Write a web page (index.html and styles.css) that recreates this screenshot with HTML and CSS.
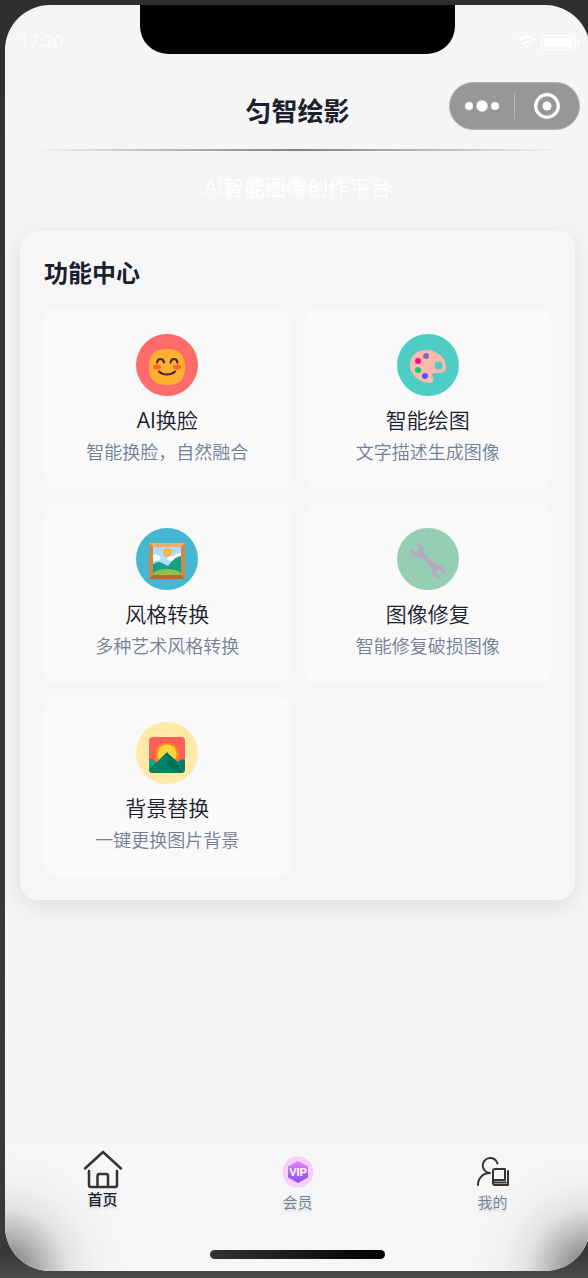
FILE: index.html
```html
<!DOCTYPE html>
<html lang="zh-CN">
<head>
	<meta charset="utf-8">
	<meta name="viewport" content="width=device-width, initial-scale=1">
	<title>匀智绘影</title>
	<link rel="stylesheet" href="styles.css">
</head>
<body>
	<div class="phone">
		<div class="status">
			<span class="time">17:20</span>
			<div class="notch"></div>
			<div class="signal">
				<svg width="18" height="15" viewBox="0 0 18 15" fill="none" stroke="#fff" stroke-width="2.4">
					<path d="M1 5.5Q9-2 17 5.5M4 9Q9 4.500 14 9"/>
					<path d="M6.300 11Q9 9 11.700 11L9 14z" fill="#fff" stroke="none"/>
				</svg>
				<svg width="40" height="16" viewBox="0 0 40 16" fill="none">
					<rect x="0.700" y="0.700" width="33" height="14" rx="3" stroke="#fff" stroke-width="1.200"/>
					<rect x="3" y="3" width="28" height="9" rx="1" fill="#fff"/>
					<path d="M36 5q3 0 3 3t-3 3z" fill="#fff"/>
				</svg>
			</div>
		</div>
		<div class="capsule">
			<button type="button" aria-label="更多">
				<svg width="34" height="12" viewBox="0 0 34 12" fill="#fff">
					<circle cx="4" cy="6" r="4"/>
					<circle cx="17" cy="6" r="5.700"/>
					<circle cx="30" cy="6" r="4"/>
				</svg>
			</button>
			<button type="button" aria-label="关闭">
				<svg width="26" height="26" viewBox="0 0 26 26">
					<circle cx="13" cy="13" r="11.300" fill="none" stroke="#fff" stroke-width="3.200"/>
					<circle cx="13" cy="13" r="4.500" fill="#fff"/>
				</svg>
			</button>
		</div>

		<div class="header">
			<h1>匀智绘影</h1>
			<div class="line"></div>
			<p>AI智能图像创作平台</p>
		</div>

		<div class="card">
			<h2>功能中心</h2>
			<div class="grid">
				<div class="item">
					<div class="icon red">
						<svg viewBox="0 0 36 36" fill="none">
							<path d="M18 0C31 0 36 6 36 18S31 36 18 36 0 30 0 18 5 0 18 0z" fill="#ffb02e"/>
							<ellipse cx="8" cy="18" rx="4" ry="2.600" fill="#ff6723"/>
							<ellipse cx="28" cy="18" rx="4" ry="2.600" fill="#ff6723"/>
							<path d="M8 13.500Q8.500 10 11.500 10T15 13.500M21.500 13.500Q22 10 25 10T28.500 13.500M10 22.500Q13 25.500 18 25.500T26 22.500" stroke="#402a32" stroke-width="2" stroke-linecap="round"/>
						</svg>
					</div>
					<h3><span class="latin">AI</span>换脸</h3>
					<p>智能换脸，自然融合</p>
				</div>
				<div class="item">
					<div class="icon teal">
						<svg viewBox="0 0 36 36">
							<path fill-rule="evenodd" d="M16 1C27 1 36 9 36 18C36 22 33 24 29 24H24Q22 24 22 26Q22 27 23 29C24 32 22 34 19 34C9 33 0 26 0 16C0 7 7 1 16 1zM28.500 12.500a4 4 0 1 0 0 8a4 4 0 1 0 0-8z" fill="#ffb9ac"/>
							<circle cx="8" cy="12" r="3" fill="#f70a8d"/>
							<circle cx="16" cy="7" r="3" fill="#8d65c5"/>
							<circle cx="8" cy="21" r="3" fill="#00d26a"/>
							<circle cx="15" cy="27" r="3" fill="#3f5fff"/>
						</svg>
					</div>
					<h3>智能绘图</h3>
					<p>文字描述生成图像</p>
				</div>
				<div class="item">
					<div class="icon blue">
						<svg viewBox="0 0 36 36">
							<path d="M0 0h36l-4 4H4z" fill="#f3ad61"/>
							<path d="M0 36h36l-4-4H4z" fill="#b86a2b"/>
							<path d="M0 0l4 4v28l-4 4zM36 0l-4 4v28l4 4z" fill="#d3883e"/>
							<path d="M4 4h28v28H4z" fill="#aedcff"/>
							<path d="M4 12q5-2 8 3q-1 3-8 3zM32 10q-5 0-7 3q-5-1-7 3q2 3 14 2z" fill="#fff"/>
							<circle cx="18.500" cy="9.500" r="4" fill="#f9a62a"/>
							<circle cx="18.500" cy="9.500" r="2.600" fill="#fcc23d"/>
							<path d="M4 21q6-4 11 0l4 2q7-10 13-10v19H4z" fill="#16a085"/>
							<path d="M4 32v-2q6-4 14-4t14 4v2z" fill="#8cc24a"/>
						</svg>
					</div>
					<h3>风格转换</h3>
					<p>多种艺术风格转换</p>
				</div>
				<div class="item">
					<div class="icon green">
						<svg viewBox="0 0 36 36">
							<path d="M5 1Q7-1 10 1Q14 4 14 10L25 21Q31 21 34 25Q37 28 35 31L31 28Q28 26 26 28Q25 31 28 33L31 35Q27 37 24 34Q21 31 22 25L11 14Q5 15 2 11Q-1 8 1 5L5 8Q8 9 9 7Q10 4 8 3z" fill="#b4acbc"/>
						</svg>
					</div>
					<h3>图像修复</h3>
					<p>智能修复破损图像</p>
				</div>
				<div class="item">
					<div class="icon yellow">
						<svg viewBox="0 0 36 36">
							<rect width="36" height="36" rx="4" fill="#ff5f59"/>
							<circle cx="18" cy="18" r="11.500" fill="#ff8f1f" stroke="#ff8f1f" stroke-width="2" stroke-dasharray="3 2"/>
							<circle cx="18" cy="17" r="9.500" fill="#ffd53e"/>
							<path d="M0 23q3-2 5 1l3 2 6-7q4-4 8 0l7 6q4-4 7-2v9q0 4-4 4H4q-4 0-4-4z" fill="#00806a"/>
							<path d="M18 15l10 12 5 9h-1L18 28z" fill="#00705a"/>
							<path d="M0 23q3-2 5 1l2 1-7 8z" fill="#1fa187"/>
							<path d="M5 28L16 17q2-2 2-2v13l11 8H4q-4 0-4-4z" fill="#008463"/>
						</svg>
					</div>
					<h3>背景替换</h3>
					<p>一键更换图片背景</p>
				</div>
			</div>
		</div>

		<nav class="tabs">
			<a href="#home" class="tab active">
				<svg width="40" height="40" viewBox="0 0 40 40" fill="none" stroke="#333" stroke-width="2.500" stroke-linecap="round" stroke-linejoin="round">
					<path d="M2 19.500L20 3L38 19.500M6 22V36q0 2 2 2H32q2 0 2-2V22M14.500 38V27q0-2 2-2H23q2 0 2 2V38"/>
				</svg>
				<span>首页</span>
			</a>
			<a href="#vip" class="tab">
				<svg width="32" height="32" viewBox="0 0 32 32">
					<defs>
						<linearGradient id="vip" x1="0" y1="0" x2="0" y2="1">
							<stop offset="0" stop-color="#dc86f3"/>
							<stop offset="1" stop-color="#8f4cf5"/>
						</linearGradient>
					</defs>
					<circle cx="16" cy="16" r="15.500" fill="#f6cffb"/>
					<path d="M16 6l9 5v10l-9 5-9-5V11z" fill="url(#vip)" stroke="url(#vip)" stroke-width="2" stroke-linejoin="round"/>
					<text x="16" y="20" text-anchor="middle" class="vip">VIP</text>
				</svg>
				<span>会员</span>
			</a>
			<a href="#mine" class="tab">
				<svg width="32" height="32" viewBox="0 0 32 32" fill="none" stroke="#333" stroke-width="2" stroke-linecap="round" stroke-linejoin="round">
					<path d="M20.500 7.500A7.500 7.500 0 1 0 13 17M1 29C1 22 6 17 13 17"/>
					<path d="M16 27V15q0-2 2-2H28V24H18q-2 0-2 3q0 2 2 2H31V15M18 26.500H29"/>
				</svg>
				<span>我的</span>
			</a>
			<div class="home-bar"></div>
		</nav>
	</div>
</body>
</html>
```

FILE: styles.css
```css
*{
	box-sizing: border-box;
	margin: 0;
	padding: 0;
}
body{
	min-height: 100vh;
	padding: 5px 0 7px 5px;
	overflow: hidden;
	background: linear-gradient(#2e2f31, #37383a 50%, #38393b 98%, #4b4c4e);
	font-family: "Open Sans", "Noto Sans CJK SC", sans-serif;
	color: #1a202c;
}
.phone{
	position: relative;
	display: flex;
	flex-direction: column;
	min-height: calc(100vh - 12px);
	margin-right: -2px;
	border-radius: 45px;
	overflow: hidden;
	background: #f5f5f5;
}
.status{
	display: grid;
	grid-template-columns: 1fr 54% 1fr;
	height: 72px;
	color: #fff;
}
.time{
	padding: 24px 0 0 15px;
	font-size: 17px;
	line-height: 24px;
}
.notch{
	height: 49px;
	border-radius: 0 0 28px 28px;
	background: #000;
}
.signal{
	display: flex;
	justify-content: flex-end;
	gap: 5px;
	padding: 30px 9px 0 0;
}
.capsule{
	position: absolute;
	top: 77px;
	right: 10px;
	display: flex;
	align-items: center;
	width: 131px;
	height: 48px;
	border: 1px solid #b4b4b4;
	border-radius: 24px;
	background: #979797;
}
.capsule button{
	flex: 1;
	display: flex;
	align-items: center;
	justify-content: center;
	height: 26px;
	border: 0;
	background: none;
}
.capsule button + button{
	border-left: 1px solid #bbb;
}
.header{
	text-align: center;
}
.header h1{
	padding: 14px 0 18px;
	font-size: 26px;
	line-height: 40px;
}
.line{
	width: 90%;
	height: 2px;
	margin: 0 auto;
	background: linear-gradient(90deg, rgba(188, 202, 191, 0), #bccabf 20%, #6f8d7a 50%, #bccabf 80%, rgba(188, 202, 191, 0));
}
.header p{
	padding: 20px 0 28px;
	font-size: 21px;
	line-height: 32px;
	color: #fff;
}
.card{
	margin: 0 15px;
	padding: 24px 24px 23px;
	border-radius: 18px;
	background: #f6f6f6;
	box-shadow: 0 6px 24px rgba(0, 0, 0, 0.1);
}
.card h2{
	margin-bottom: 18px;
	font-size: 24px;
	line-height: 36px;
}
.grid{
	display: grid;
	grid-template-columns: 1fr 1fr;
	gap: 14px;
}
.item{
	padding: 24px 12px;
	border: 1px solid #fbfbfb;
	border-radius: 12px;
	background: #f9f9f9;
	text-align: center;
}
.icon{
	display: flex;
	align-items: center;
	justify-content: center;
	width: 62px;
	height: 62px;
	margin: 0 auto 10px;
	padding-top: 4px;
	border-radius: 50%;
}
.icon svg{
	width: 36px;
	height: 36px;
}
.red{ background: #ff6b6b; }
.teal{ background: #4ecdc4; }
.blue{ background: #45b7d1; }
.green{ background: #96ceb4; }
.yellow{ background: #ffeaa7; }
.item h3{
	margin-bottom: 6px;
	font-size: 21px;
	font-weight: 350;
	line-height: 28px;
}
.item .latin{
	font-weight: 500;
}
.item p{
	font-size: 18px;
	font-weight: 350;
	line-height: 24px;
	color: #718096;
}
.tabs{
	display: grid;
	grid-template-columns: 1fr 1fr 1fr;
	grid-template-rows: 1fr auto;
	height: 127px;
	margin-top: auto;
	border-top: 1px solid #f8f8f8;
	background:
		radial-gradient(circle at 0 100%, rgba(110, 114, 112, 0.8) 15px, rgba(120, 124, 122, 0.5) 38px, rgba(140, 144, 142, 0.18) 64px, rgba(160, 160, 160, 0.05) 90px, rgba(160, 160, 160, 0) 120px),
		radial-gradient(circle at 100% 100%, rgba(110, 114, 112, 0.8) 15px, rgba(120, 124, 122, 0.5) 38px, rgba(140, 144, 142, 0.18) 64px, rgba(160, 160, 160, 0.05) 90px, rgba(160, 160, 160, 0) 120px),
		#f6f6f6;
}
.tab{
	display: flex;
	flex-direction: column;
	align-items: center;
	padding-top: 11px;
	font-size: 15px;
	font-weight: 350;
	line-height: 20px;
	color: #718096;
	text-decoration: none;
	text-shadow: 0 2px 3px rgba(0, 0, 0, 0.15);
}
.tab span{
	padding-top: 4px;
}
.tab.active{
	padding-top: 4px;
	font-weight: 500;
	color: #1a202c;
}
.tab.active span{
	padding-top: 0;
}
.vip{
	font-family: "Liberation Sans", sans-serif;
	font-size: 11px;
	font-weight: bold;
	fill: #fff;
	text-shadow: none;
}
.home-bar{
	grid-column: 1 / -1;
	width: 30%;
	height: 9px;
	margin: 0 auto 12px;
	border-radius: 5px;
	background: linear-gradient(90deg, #333, #000);
}
```
